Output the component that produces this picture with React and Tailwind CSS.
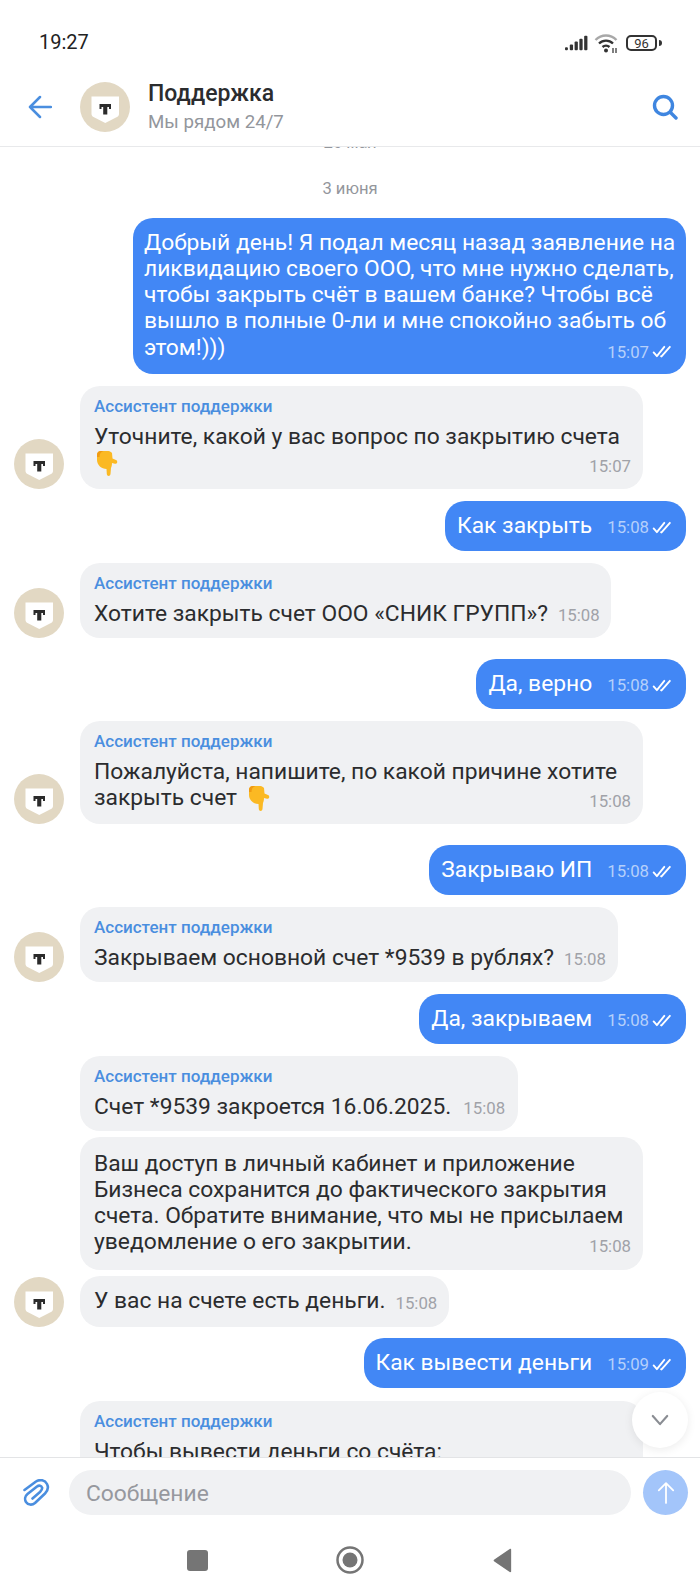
const Shield = () => (
  <svg viewBox="0 0 50 50" className="w-[50px] h-[50px] shrink-0">
    <circle cx="25" cy="25" r="25" fill="#e2d8c3" />
    <path d="M11.500 14.500H39V32C39 33.500 38 34.500 36.500 35.300L25.250 41L14 35.300C12.500 34.500 11.500 33.500 11.500 32Z" fill="#fff" />
    <path d="M19.500 22H31V27H29V25H27.300V32.500H23.200V25H21.500V27H19.500Z" fill="#2b2b2b" />
  </svg>
);

const Hand = ({ className = "" }) => (
  <svg viewBox="0 0 21 25" className={`inline-block w-[22px] h-[25px] align-[-6px] ${className}`}>
    <path d="M.500 4C.500 1.500 2 0 4.500 0H12C13.500 0 14.500 1 15.500 2L16 7.500L19.500 9C21.500 10 21 13 18.500 12.800L15.500 12C15.500 14 15 16 14.500 17L14 23C13.800 25.500 10.500 25.500 10.300 23L10 18C5 18 .500 14 .500 9Z" fill="#fbb923" />
    <path d="M.500 4C.500 1.500 2 0 4.500 0H7C4 1 3 3 3 6H.500Z" fill="#f09a12" />
  </svg>
);

const Checks = () => (
  <svg viewBox="0 0 20 14" className="w-[20px] h-[13px] ml-[3px]" fill="none" stroke="#fff" strokeWidth="2" strokeLinecap="round" strokeLinejoin="round">
    <path d="M1 8L4.500 12L12.500 2" />
    <path d="M9 12L9.500 12.300L18.500 2" />
  </svg>
);

const Time = ({ t, out, className = "" }) => (
  <span className={`flex items-center text-[16.800px] leading-[20px] whitespace-nowrap ${out ? "text-[#b5d0fb]" : "text-[#a0a2a8]"} ${className}`}>
    {t}
    {out && <Checks />}
  </span>
);

const Out = ({ t, children, mt = "mt-3", multi }) =>
  multi ? (
    <div className={`self-end mr-[14px] w-[553px] h-[156px] rounded-[20px] bg-[#4287f5] pl-[11px] pr-[14px] pt-[12px] text-white flex flex-col ${mt}`}>
      <p className="text-[22.800px] leading-[26.300px] whitespace-nowrap">{children}</p>
      <Time t={t} out className="self-end -mt-[19px]" />
    </div>
  ) : (
    <div className={`self-end mr-[14px] h-[50px] rounded-[20px] bg-[#4287f5] pl-[12px] pr-[14px] text-white flex items-center ${mt}`}>
      <span className="text-[22.800px] leading-[26px] whitespace-nowrap">{children}</span>
      <Time t={t} out className="ml-[15px] mt-[3px]" />
    </div>
  );

const In = ({ name, avatar, t, children, mt = "mt-3", inline, w, h, gap = "ml-[10px]" }) => (
  <div className={`flex items-end ${mt}`}>
    <div className="w-[66px] ml-[14px] shrink-0">{avatar && <Shield />}</div>
    <div className={`rounded-[20px] bg-[#f0f1f3] pl-[14px] pr-[12px] text-[#2b2c2e] flex flex-col ${name ? "pt-[10px]" : "pt-[14px]"} ${w} ${h}`}>
      {name && <div className="text-[17px] leading-[20px] font-medium text-[#4a8edf] whitespace-nowrap">Ассистент поддержки</div>}
      {inline ? (
        <div className="flex items-baseline mt-[8px]">
          <span className="text-[22.800px] leading-[26px] whitespace-nowrap">{children}</span>
          <Time t={t} className={gap} />
        </div>
      ) : (
        <>
          <p className={`text-[22.800px] leading-[26.300px] whitespace-nowrap ${name ? "mt-[8px]" : ""}`}>{children}</p>
          {t && <Time t={t} className="self-end -mt-[20px]" />}
        </>
      )}
    </div>
  </div>
);

export default function App() {
  return (
    <div className="w-[700px] h-[1594px] bg-white flex flex-col overflow-hidden" style={{ fontFamily: 'Roboto, "Noto Sans", sans-serif' }}>
      <div className="h-[78px] shrink-0 flex items-start justify-between pt-[30px] pl-[39px] pr-[38px]">
        <span className="text-[20px] leading-[24px] text-[#222]">19:27</span>
        <div className="flex items-center mt-[3px]">
          <svg viewBox="0 0 24 16" className="w-[23px] h-[16px]" fill="#333">
            <rect x="0" y="12.500" width="3" height="3" rx="1" />
            <rect x="5" y="9.500" width="3.400" height="6" rx="1" />
            <rect x="10" y="6.500" width="3.400" height="9" rx="1" />
            <rect x="15" y="3.500" width="3.400" height="12" rx="1" />
            <rect x="20" y="0.500" width="3.400" height="15" rx="1" />
          </svg>
          <svg viewBox="0 0 24 20" className="w-[24px] h-[20px] ml-[6px]" fill="none">
            <path d="M1.500 7C7.500 1 16.500 1 22.500 7" stroke="#a8a8a8" strokeWidth="2.400" />
            <path d="M5 10.500C9 6.700 15 6.700 19 10.500" stroke="#333" strokeWidth="2.400" />
            <path d="M8.500 14C10.500 12.300 13.500 12.300 15.500 14" stroke="#333" strokeWidth="2.400" />
            <circle cx="12" cy="17.500" r="2" fill="#333" />
            <path d="M19 15V20M22 15V20" stroke="#555" strokeWidth="1.500" />
          </svg>
          <div className="flex items-center ml-[8px]">
            <div className="w-[31px] h-[16px] rounded-[5px] border-2 border-[#333] flex items-center justify-center text-[13px] leading-none text-[#333]">96</div>
            <div className="w-[3px] h-[6px] ml-[2px] bg-[#333] rounded-r" />
          </div>
        </div>
      </div>

      <div className="h-[70px] shrink-0 flex items-center border-b border-[#e8e9eb] pl-[28px] pr-[22px] -mt-[1px] pb-[10px]">
        <svg viewBox="0 0 24 24" className="w-[24px] h-[24px]" fill="none" stroke="#4a8edf" strokeWidth="2.500" strokeLinecap="round" strokeLinejoin="round">
          <path d="M2 12H23M12 2L2 12L12 22" />
        </svg>
        <div className="ml-[28px]"><Shield /></div>
        <div className="ml-[18px] flex-1 mt-[2px]">
          <div className="text-[23px] leading-[28px] font-medium text-[#2b2c2e]">Поддержка</div>
          <div className="text-[18.700px] leading-[25px] mt-[2px] text-[#93969c]">Мы рядом 24/7</div>
        </div>
        <svg viewBox="0 0 26 26" className="w-[26px] h-[26px]" fill="none" stroke="#3f86e0" strokeWidth="3.400" strokeLinecap="round">
          <circle cx="11.500" cy="11.500" r="9" />
          <path d="M18.500 18.500L24 24" />
        </svg>
      </div>

      <div className="relative flex-1 min-h-0 overflow-hidden">
        <div className="flex flex-col">
          <div className="text-center text-[16.600px] leading-[20px] text-[#93969c] -mt-[14px]">26 мая</div>
          <div className="text-center text-[16.600px] leading-[20px] text-[#93969c] mt-[26px]">3 июня</div>
          <Out t="15:07" multi mt="mt-[18.500px]">
            Добрый день! Я подал месяц назад заявление на<br />
            ликвидацию своего ООО, что мне нужно сделать,<br />
            чтобы закрыть счёт в вашем банке? Чтобы всё<br />
            вышло в полные 0-ли и мне спокойно забыть об<br />
            этом!)))
          </Out>
          <In name avatar t="15:07" w="w-[563px]" h="h-[103px]">
            Уточните, какой у вас вопрос по закрытию счета<br /><Hand className="ml-[2px]" />
          </In>
          <Out t="15:08">Как закрыть</Out>
          <In name avatar inline t="15:08" w="w-[531px]" h="h-[75px]">Хотите закрыть счет ООО «СНИК ГРУПП»?</In>
          <Out t="15:08" mt="mt-[21px]">Да, верно</Out>
          <In name avatar t="15:08" w="w-[563px]" h="h-[103px]">
            Пожалуйста, напишите, по какой причине хотите<br />закрыть счет <Hand className="ml-[5px]" />
          </In>
          <Out t="15:08" mt="mt-[21px]">Закрываю ИП</Out>
          <In name avatar inline t="15:08" w="w-[538px]" h="h-[75px]">Закрываем основной счет *9539 в рублях?</In>
          <Out t="15:08">Да, закрываем</Out>
          <In name inline t="15:08" w="w-[438px]" h="h-[75px]" gap="ml-[12px]">Счет *9539 закроется 16.06.2025.</In>
          <In t="15:08" mt="mt-[6px]" w="w-[563px]" h="h-[133px]">
            Ваш доступ в личный кабинет и приложение<br />
            Бизнеса сохранится до фактического закрытия<br />
            счета. Обратите внимание, что мы не присылаем<br />
            уведомление о его закрытии.
          </In>
          <div className="flex items-end mt-[6px]">
            <div className="w-[66px] ml-[14px] shrink-0"><Shield /></div>
            <div className="h-[51px] rounded-[20px] bg-[#f0f1f3] pl-[14px] pr-[12px] text-[#2b2c2e] flex items-center">
              <span className="text-[22.800px] leading-[26px] whitespace-nowrap">У вас на счете есть деньги.</span>
              <Time t="15:08" className="ml-[10px] mt-[3px]" />
            </div>
          </div>
          <Out t="15:09" mt="mt-[11px]">Как вывести деньги</Out>
          <In name mt="mt-[13px]" w="w-[563px]" h="h-[100px]">Чтобы вывести деньги со счёта:</In>
        </div>
        <div className="absolute right-[12px] bottom-[9px] w-[56px] h-[56px] rounded-full bg-white shadow-[0_2px_10px_rgba(0,0,0,0.08)] flex items-center justify-center">
          <svg viewBox="0 0 20 14" className="w-[18px] h-[13px]" fill="none" stroke="#8a8d93" strokeWidth="2.400" strokeLinecap="round" strokeLinejoin="round">
            <path d="M2 2L10 11L18 2" />
          </svg>
        </div>
      </div>

      <div className="h-[137px] shrink-0 bg-white border-t border-[#e3e4e6] flex flex-col">
        <div className="flex items-center pl-[23px] pr-[12px] mt-[12px]">
          <svg viewBox="0 0 27 27" className="w-[27px] h-[27px]" fill="none" stroke="#4a8edf" strokeWidth="2.600" strokeLinecap="round" strokeLinejoin="round">
            <path d="M1.500 11L13 2.500C17 0 22 1 24 5C26 9 24.500 12 22 14.500L12 24C9 26.500 5 26 3 23C1.500 20.500 2 17 4.500 15L14 7.500C16 6 18.500 6.500 19 8.500C19.500 10 19 11 17 13L9.500 19.500" />
          </svg>
          <div className="ml-[19px] flex-1 h-[45px] rounded-[22.500px] bg-[#f0f1f3] flex items-center pl-[17px] pt-[3px] text-[22.800px] text-[#96989e]">Сообщение</div>
          <div className="ml-[12px] w-[45px] h-[45px] rounded-full bg-[#a3c5fa] flex items-center justify-center">
            <svg viewBox="0 0 20 26" className="w-[18px] h-[24px]" fill="none" stroke="#fff" strokeWidth="2" strokeLinecap="round" strokeLinejoin="round">
              <path d="M10 24V2M2 10L10 2L18 10" />
            </svg>
          </div>
        </div>
        <div className="flex items-center justify-center mt-[31px]">
          <div className="w-[21px] h-[21px] rounded-[3px] bg-[#757575]" />
          <svg viewBox="0 0 28 28" className="w-[28px] h-[28px] ml-[128px]">
            <circle cx="14" cy="14" r="12.500" fill="none" stroke="#757575" strokeWidth="2.500" />
            <circle cx="14" cy="14" r="7.500" fill="#757575" />
          </svg>
          <svg viewBox="0 0 20 26" className="w-[21px] h-[25px] ml-[128px]">
            <path d="M19 1.500V24.500C19 25 18 25.500 17.500 25L1.500 14C0.500 13.300 0.500 12.700 1.500 12L17.500 1C18 .5 19 1 19 1.500Z" fill="#757575" />
          </svg>
        </div>
      </div>
    </div>
  );
}
